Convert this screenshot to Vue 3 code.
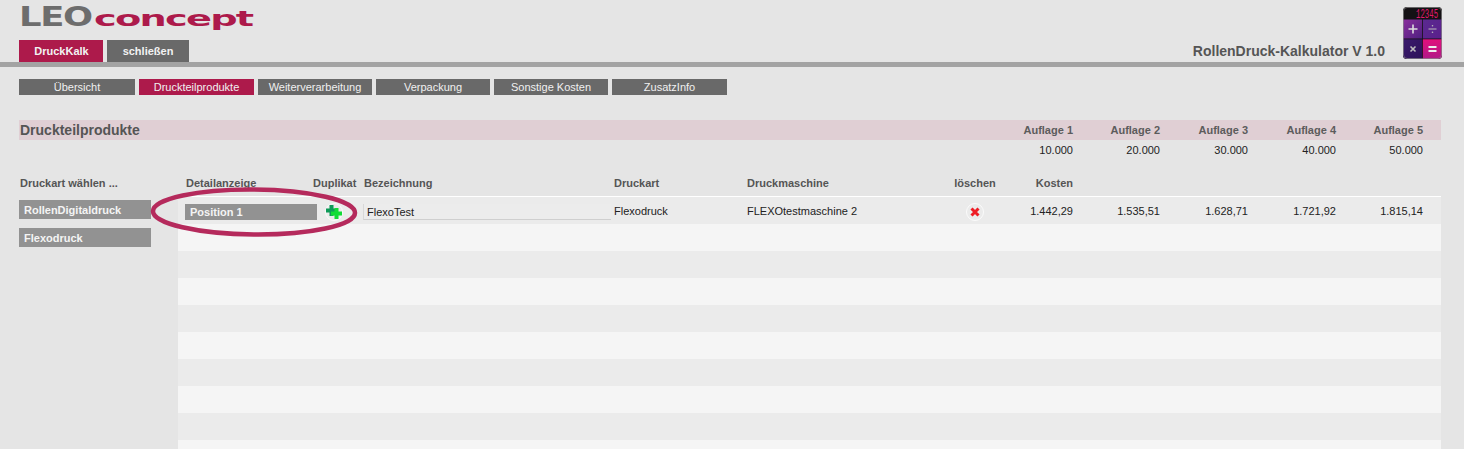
<script setup>
const navItems = [
  { label: 'Übersicht', width: 116 },
  { label: 'Druckteilprodukte', width: 115, active: true },
  { label: 'Weiterverarbeitung', width: 114 },
  { label: 'Verpackung', width: 114 },
  { label: 'Sonstige Kosten', width: 114 },
  { label: 'ZusatzInfo', width: 115 },
]
const auflagen = [
  ['Auflage 1', '10.000', '1.442,29'],
  ['Auflage 2', '20.000', '1.535,51'],
  ['Auflage 3', '30.000', '1.628,71'],
  ['Auflage 4', '40.000', '1.721,92'],
  ['Auflage 5', '50.000', '1.815,14'],
]
const emptyRows = 9
</script>

<template>
  <div class="page">
    <header class="top">
      <div class="brand">
        <div class="logo"><span class="leo"><span class="leo-t">LEO</span></span><span class="concept"><span class="concept-t">concept</span></span></div>
        <div class="top-buttons">
          <button class="tbtn crimson w84">DruckKalk</button>
          <button class="tbtn dark w82">schließen</button>
        </div>
      </div>
      <div class="app-id">
        <span class="app-title">RollenDruck-Kalkulator V 1.0</span>
        <svg class="calc" width="39" height="52" viewBox="0 0 39 52">
          <defs>
            <linearGradient id="k1" x1="0" y1="0" x2="1" y2="1"><stop offset="0" stop-color="#8a2f9c" /><stop offset="1" stop-color="#4f1f80" /></linearGradient>
            <linearGradient id="k2" x1="0" y1="0" x2="1" y2="1"><stop offset="0" stop-color="#5a2a90" /><stop offset="1" stop-color="#5b1f8c" /></linearGradient>
            <linearGradient id="k3" x1="0" y1="0" x2="1" y2="1"><stop offset="0" stop-color="#3b1a6e" /><stop offset="1" stop-color="#2c1258" /></linearGradient>
            <linearGradient id="k4" x1="0" y1="0" x2="0" y2="1"><stop offset="0" stop-color="#e0107c" /><stop offset="1" stop-color="#b01a88" /></linearGradient>
            <clipPath id="round"><rect width="39" height="52" rx="4" /></clipPath>
          </defs>
          <g clip-path="url(#round)">
            <rect width="39" height="52" fill="#141114" />
            <rect x="0" y="12.500" width="19" height="19" fill="url(#k1)" />
            <rect x="19.800" y="12.500" width="19.200" height="19" fill="url(#k2)" />
            <rect x="0" y="32.300" width="19" height="19.700" fill="url(#k3)" />
            <rect x="19.800" y="32.300" width="19.200" height="19.700" fill="url(#k4)" />
            <text x="0" y="0" transform="translate(13 11) scale(0.92 1.5)" class="digits">12345</text>
            <path d="M5.500 22h9M10 17.500v9" stroke="#ddd" stroke-width="1.600" />
            <path d="M25.500 22h8" stroke="#bbb" stroke-width="1" />
            <circle cx="29.500" cy="18.800" r=".8" fill="#bbb" /><circle cx="29.500" cy="25.200" r=".8" fill="#bbb" />
            <path d="M7.500 39.500l5 5M12.500 39.500l-5 5" stroke="#bbb" stroke-width="1.600" />
            <path d="M25.500 40h8M25.500 44h8" stroke="#eee" stroke-width="1.800" />
            <rect x=".5" y=".5" width="38" height="51" rx="3.500" fill="none" stroke="#8a8a8a" stroke-opacity=".7" />
          </g>
        </svg>
      </div>
    </header>

    <nav class="nav">
      <a v-for="n in navItems" :key="n.label" class="nav-item" :class="{ active: n.active }" :style="{ width: n.width + 'px' }">{{ n.label }}</a>
    </nav>

    <section class="content">
      <div class="band cols">
        <h2 class="section-title">Druckteilprodukte</h2>
        <span v-for="a in auflagen" :key="a[0]" class="num head">{{ a[0] }}</span>
      </div>
      <div class="qty cols">
        <span class="spacer"></span>
        <span v-for="a in auflagen" :key="a[0]" class="num">{{ a[1] }}</span>
      </div>

      <div class="work">
        <aside class="side">
          <div class="side-head">Druckart wählen ...</div>
          <button class="side-btn">RollenDigitaldruck</button>
          <button class="side-btn">Flexodruck</button>
        </aside>

        <div class="table">
          <div class="thead tcols">
            <span class="pl8">Detailanzeige</span>
            <span>Duplikat</span>
            <span class="pl3">Bezeichnung</span>
            <span class="pl2">Druckart</span>
            <span class="pl2">Druckmaschine</span>
            <span class="center">löschen</span>
            <span class="num">Kosten</span>
          </div>
          <div class="row odd tcols">
            <span><button class="pos-btn">Position 1</button></span>
            <span class="icon-cell">
              <span class="round-icon">
                <svg width="16" height="14" viewBox="0 0 16 14">
                  <path d="M3.500 0h4v3.500H11v4H7.500V11h-4V7.500H0v-4h3.500z" fill="#0e9a58" />
                  <path d="M8.500 3h4v3.500H16v4h-3.500V14h-4v-3.500H5v-4h3.500z" fill="#10dc35" />
                </svg>
              </span>
            </span>
            <span class="input-wrap"><input class="name" value="FlexoTest" /></span>
            <span class="pl2">Flexodruck</span>
            <span class="pl2">FLEXOtestmaschine 2</span>
            <span class="center del-cell">
              <span class="round-icon">
                <svg width="10" height="10" viewBox="0 0 10 10"><path d="M1.500 1.500l7 7M8.500 1.500l-7 7" stroke="#ee1c25" stroke-width="3" /></svg>
              </span>
            </span>
            <span v-for="a in auflagen" :key="a[0]" class="num">{{ a[2] }}</span>
          </div>
          <div v-for="i in emptyRows" :key="i" class="row" :class="i % 2 ? 'even' : 'odd'"></div>
        </div>
      </div>
    </section>

    <svg class="highlight" width="216" height="56" viewBox="0 0 216 56">
      <ellipse cx="108" cy="28" rx="101" ry="22.500" transform="rotate(0.5 108 28)" fill="none" stroke="#b52a5c" stroke-width="4.500" />
    </svg>
  </div>
</template>

<style>
html, body { margin: 0; background: #e5e5e5; }
</style>

<style scoped>
.page {
  position: relative;
  width: 1464px;
  height: 449px;
  overflow: hidden;
  background: #e5e5e5;
  font-family: "Liberation Sans", Arial, sans-serif;
  font-size: 11px;
  color: #222;
}
button { font-family: inherit; border: 0; padding: 0; cursor: pointer; }

.top {
  display: flex;
  justify-content: space-between;
  align-items: flex-end;
  height: 62px;
  padding: 0 22px 0 19px;
  border-bottom: 5px solid #a3a3a3;
}
.logo {
  display: flex;
  align-items: baseline;
  height: 39px;
  font-family: "DejaVu Sans", sans-serif;
  font-weight: 700;
  line-height: 32px;
  white-space: nowrap;
}
.leo { display: inline-block; width: 75px; font-size: 26px; color: #6d6d6d; letter-spacing: -1px; }
.leo-t { display: inline-block; transform: scaleX(1.36); transform-origin: left; }
.concept { display: inline-block; width: 158px; font-size: 22px; color: #ad1a4b; letter-spacing: -1px; }
.concept-t { display: inline-block; transform: scaleX(1.74); transform-origin: left; }
.top-buttons { display: flex; gap: 4px; }
.tbtn {
  height: 22px;
  color: #f2f2f2;
  font-size: 11px;
  font-weight: 700;
}
.w84 { width: 84px; padding-left: 1px; }
.w82 { width: 82px; }
.crimson { background: #ad1a4b; }
.dark { background: #696969; }

.app-id { display: flex; align-items: flex-end; gap: 18px; }
.app-title { font-size: 14px; font-weight: 700; color: #555; line-height: 16px; margin-bottom: 3px; }
.calc { display: block; margin-bottom: 3px; }
.digits { font-family: "Liberation Mono", monospace; font-size: 8px; fill: #e0186e; }

.nav { display: flex; gap: 4px; padding: 12px 0 0 19px; }
.nav-item {
  display: block;
  height: 16px;
  line-height: 17px;
  text-align: center;
  font-size: 11px;
  color: #f0f0f0;
  background: #696969;
}
.nav-item.active { background: #ad1a4b; }

.content { padding: 25px 23px 0 19px; }
.cols { display: grid; grid-template-columns: 967px 87px 87px 88px 88px 87px; }
.band { height: 20px; line-height: 20px; background: #e0cfd4; }
.section-title { margin: 0; padding-left: 1px; font-size: 14px; font-weight: 700; color: #555; line-height: 20px; }
.qty { height: 21px; line-height: 21px; color: #222; }
.num { text-align: right; }
.head { font-weight: 700; color: #5c5c5c; }

.work { display: flex; gap: 27px; margin-top: 12px; }
.side { width: 132px; flex: none; }
.side-head { height: 27px; line-height: 20px; padding-left: 1px; font-weight: 700; color: #555; }
.side-btn {
  display: block;
  width: 132px;
  height: 19px;
  margin-bottom: 9px;
  padding-left: 5px;
  text-align: left;
  background: #929292;
  color: #f4f4f4;
  font-size: 11px;
  font-weight: 700;
}

.table { width: 1263px; flex: none; }
.tcols {
  display: grid;
  grid-template-columns: 135px 48px 251px 133px 205px 50px 73px 87px 88px 88px 87px;
  align-items: center;
}
.thead {
  height: 23px;
  border-bottom: 1px solid #fff;
  font-weight: 700;
  color: #555;
  align-items: start;
  line-height: 20px;
}
.pl8 { padding-left: 8px; }
.pl3 { padding-left: 3px; }
.pl2 { padding-left: 2px; }
.center { text-align: center; }
.row { height: 27px; }
.odd { background: #ebebeb; }
.even { background: #f5f5f5; }
.pos-btn {
  display: block;
  width: 132px;
  height: 16px;
  margin: 3px 0 0 7px;
  padding-left: 5px;
  text-align: left;
  background: #929292;
  color: #f4f4f4;
  font-size: 11px;
  font-weight: 700;
}
.icon-cell { display: flex; justify-content: center; padding-right: 6px; margin-top: 3px; }
.del-cell { display: flex; justify-content: center; margin-top: 3px; }
.round-icon {
  display: flex;
  align-items: center;
  justify-content: center;
  width: 18px;
  height: 18px;
  border-radius: 50%;
  border: 1px solid #fbfbfb;
  box-sizing: border-box;
}
.round-icon svg { flex: none; }
.name {
  display: block;
  width: 248px;
  height: 16px;
  box-sizing: border-box;
  margin: 3px 0 0 2px;
  padding: 0 0 0 3px;
  border: 0;
  border-left: 1px solid #d8d8d8;
  border-bottom: 1px solid #cfcfcf;
  background: #ececec;
  font-family: inherit;
  font-size: 11px;
  color: #222;
  outline: none;
}

.highlight { position: absolute; left: 146px; top: 184px; pointer-events: none; }
</style>
